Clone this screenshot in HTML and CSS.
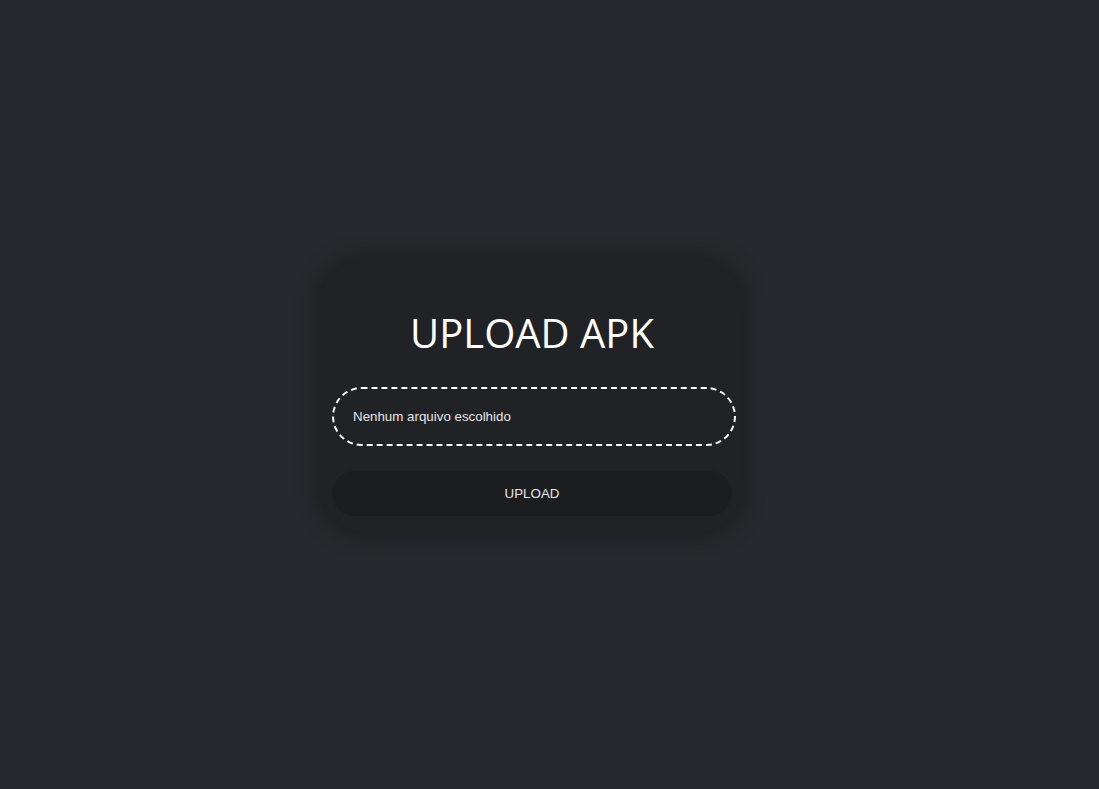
FILE: index.html
```html
<!DOCTYPE html>
<html lang="pt">
<head>
<meta charset="utf-8">
<title>Upload APK</title>
<link rel="stylesheet" href="styles.css">
</head>
<body>
<main class="stage">
  <form class="card">
    <h1 class="title">UPLOAD APK</h1>
    <label class="file">
      <span class="file-text">Nenhum arquivo escolhido</span>
    </label>
    <button type="button" class="btn">UPLOAD</button>
  </form>
</main>
</body>
</html>
```
FILE: styles.css
```css
html, body {
  margin: 0;
  height: 100%;
}
body {
  background: #28292e;
  font-family: "Liberation Sans", Arial, sans-serif;
}
.stage {
  height: 100%;
  display: flex;
  align-items: center;
  justify-content: center;
  padding-right: 37px;
  padding-top: 2px;
  box-sizing: border-box;
}
.card {
  width: 422px;
  box-sizing: border-box;
  padding: 45px 10px 16px 12px;
  background: #212226;
  border-radius: 42px;
  box-shadow: 0 0 18px 4px rgba(20, 21, 24, 0.55);
  display: flex;
  flex-direction: column;
}
.title {
  margin: 0 0 26px;
  font-family: "Open Sans", sans-serif;
  font-weight: 400;
  font-size: 40px;
  line-height: 56px;
  color: #ffffff;
  text-align: center;
  letter-spacing: 0;
}
.file {
  width: 404px;
  height: 59px;
  box-sizing: border-box;
  border: 2px dashed #ffffff;
  border-radius: 30px;
  display: flex;
  align-items: center;
  padding-left: 19px;
}
.file-text {
  font-size: 13.333px;
  color: #e6e6e6;
}
.btn {
  margin-top: 25px;
  width: 400px;
  height: 45px;
  border: 0;
  border-radius: 23px;
  background: #1c1d21;
  color: #e6e6e6;
  font-family: "Liberation Sans", Arial, sans-serif;
  font-size: 13.333px;
  padding: 0;
}
```
